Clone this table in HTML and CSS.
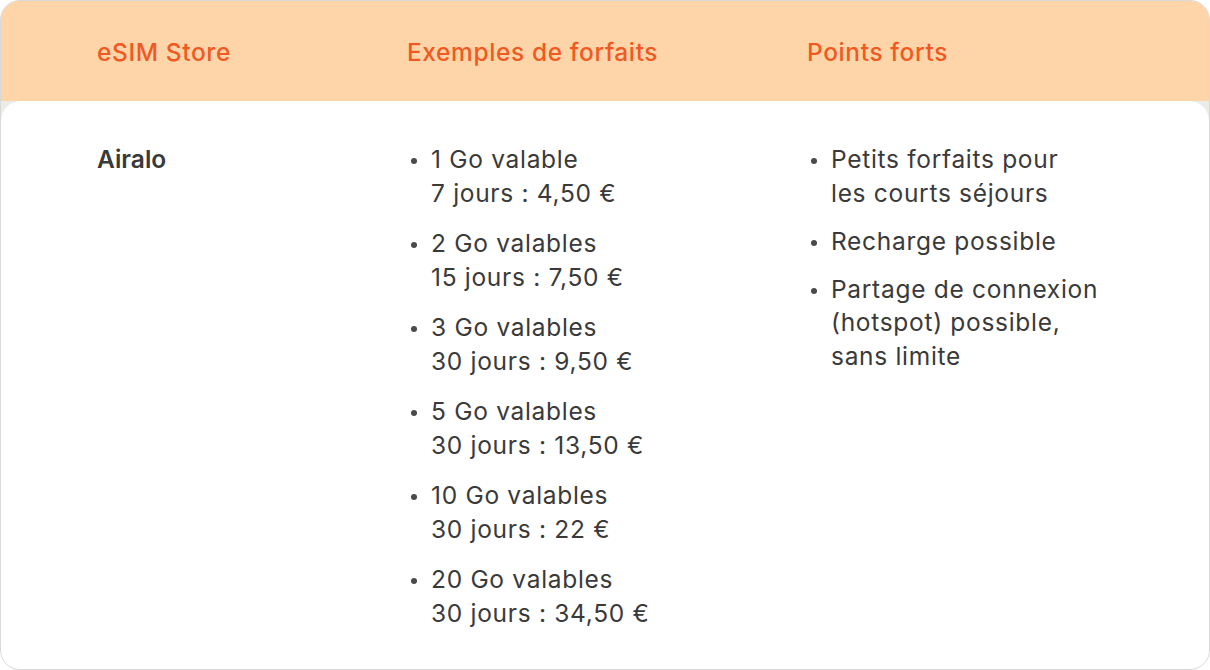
FILE: index.html
```html
<!DOCTYPE html>
<html lang="fr">
<head>
<meta charset="utf-8">
<link rel="stylesheet" href="styles.css">
</head>
<body>
<div class="table">
  <div class="head">
    <div class="c1">eSIM Store</div>
    <div class="c2">Exemples de forfaits</div>
    <div class="c3">Points forts</div>
  </div>
  <div class="body">
    <div class="c1 name">Airalo</div>
    <ul class="c2 list plans">
      <li>1 Go valable<br>7 jours : 4,50 €</li>
      <li>2 Go valables<br>15 jours : 7,50 €</li>
      <li>3 Go valables<br>30 jours : 9,50 €</li>
      <li>5 Go valables<br>30 jours : 13,50 €</li>
      <li>10 Go valables<br>30 jours : 22 €</li>
      <li>20 Go valables<br>30 jours : 34,50 €</li>
    </ul>
    <ul class="c3 list points">
      <li>Petits forfaits pour<br>les courts séjours</li>
      <li>Recharge possible</li>
      <li>Partage de connexion<br>(hotspot) possible,<br>sans limite</li>
    </ul>
  </div>
</div>
</body>
</html>
```
FILE: styles.css
```css
html, body {
  margin: 0;
  padding: 0;
  background: #ffffff;
}
body {
  font-family: Inter, "Noto Sans", sans-serif;
  width: 1210px;
  height: 670px;
  overflow: hidden;
}
.table {
  box-sizing: border-box;
  width: 1210px;
  height: 670px;
  border: 1px solid #d9d9d9;
  border-radius: 20px;
  background: #ecebe6;
  overflow: hidden;
  display: flex;
  flex-direction: column;
}
.head {
  height: 100px;
  background: #fed5a9;
  display: flex;
  align-items: center;
  color: #f05a22;
  font-size: 24.5px;
  font-weight: 500;
  letter-spacing: 0.6px;
  padding-top: 1px;
  box-sizing: border-box;
}
.c1 {
  width: 406px;
  padding-left: 96px;
  box-sizing: border-box;
  flex: none;
}
.c2 {
  width: 400px;
  flex: none;
  box-sizing: border-box;
}
.c3 {
  flex: 1;
}
.body {
  flex: 1;
  background: #ffffff;
  border-radius: 20px 20px 0 0;
  display: flex;
  align-items: flex-start;
  padding-top: 42px;
  color: #3a3a3a;
  font-size: 24.5px;
  line-height: 33.5px;
  letter-spacing: 0.7px;
}
.name {
  font-weight: 600;
  letter-spacing: 0;
}
.list {
  margin: 0;
  padding: 0;
  list-style: none;
}
.list li {
  position: relative;
  padding-left: 24px;
}
.list li::before {
  content: "";
  position: absolute;
  left: 4px;
  top: 15px;
  width: 6px;
  height: 6px;
  border-radius: 50%;
  background: #4a4a4a;
}
.plans li + li {
  margin-top: 17px;
}
.points li + li {
  margin-top: 14.5px;
}
```
